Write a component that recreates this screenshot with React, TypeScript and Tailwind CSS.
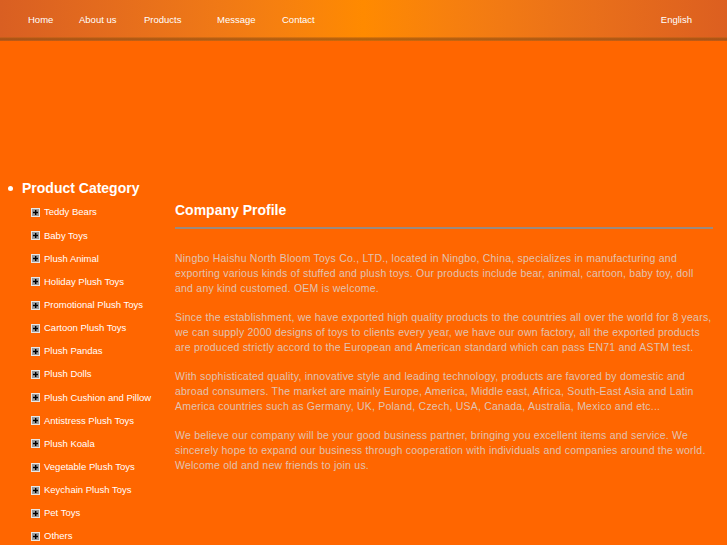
const navLinks = [
  { label: "Home", w: "w-[51px]" },
  { label: "About us", w: "w-[65px]" },
  { label: "Products", w: "w-[73px]" },
  { label: "Message", w: "w-[65px]" },
  { label: "Contact", w: "w-[60px]" },
];

const categories = [
  "Teddy Bears",
  "Baby Toys",
  "Plush Animal",
  "Holiday Plush Toys",
  "Promotional Plush Toys",
  "Cartoon Plush Toys",
  "Plush Pandas",
  "Plush Dolls",
  "Plush Cushion and Pillow",
  "Antistress Plush Toys",
  "Plush Koala",
  "Vegetable Plush Toys",
  "Keychain Plush Toys",
  "Pet Toys",
  "Others",
];

function PlusBox() {
  return (
    <span className="flex h-[9px] w-[9px] shrink-0 items-center justify-center border border-[#e8e8e8] bg-[#9a9a9a]">
      <svg width="7" height="7" viewBox="0 0 7 7">
        <rect x="3" y="1" width="1.4" height="5" fill="#000" />
        <rect x="1" y="2.8" width="5" height="1.4" fill="#000" />
      </svg>
    </span>
  );
}

export default function App() {
  return (
    <div className="min-h-[545px] bg-[#ff6600] font-['Liberation_Sans',Arial,sans-serif]">
      {/* ── Top nav ── */}
      <header className="relative h-[41px] bg-linear-to-r from-[#d95f22] via-[#ff8a00] to-[#dc5f20]">
        <nav className="flex h-[40px] items-center pl-[28px] pr-[35px] text-[9.5px] text-white">
          {navLinks.map((l) => (
            <a key={l.label} className={l.w}>
              {l.label}
            </a>
          ))}
          <a className="ml-auto">English</a>
        </nav>
        <div className="absolute bottom-0 inset-x-0 h-[4px] bg-linear-to-b from-[#c96a10]/40 via-[#8a4a10]/70 to-[#b35a10]/60" />
      </header>

      {/* ── Body ── */}
      <div className="flex pt-[137px]">
        {/* Sidebar */}
        <aside className="w-[175px] shrink-0">
          <h2 className="flex items-center gap-[9px] pl-[8px] text-[14px] font-bold text-white">
            <span className="h-[5px] w-[5px] rounded-full bg-white" />
            Product Category
          </h2>
          <ul className="mt-[7px] flex flex-col gap-[10.15px] pl-[31px] text-[9.5px] text-white">
            {categories.map((c) => (
              <li key={c} className="flex h-[13px] items-center gap-[4px]">
                <PlusBox />
                <span>{c}</span>
              </li>
            ))}
          </ul>
        </aside>

        {/* Main content */}
        <main className="mr-[14px] flex-1 pt-[22px]">
          <h1 className="text-[14px] font-bold text-white">Company Profile</h1>
          <div className="mt-[6px] h-[2px] bg-[#9a8a80]" />
          <div className="mt-[22px] mr-[-1px] flex flex-col gap-[14px] text-[10.5px] leading-[15px] tracking-[0.22px] text-[#e2c3b2]">
            <p>
              Ningbo Haishu North Bloom Toys Co., LTD., located in Ningbo, China, specializes in manufacturing and
              exporting various kinds of stuffed and plush toys. Our products include bear, animal, cartoon, baby toy, doll
              and any kind customed. OEM is welcome.
            </p>
            <p>
              Since the establishment, we have exported high quality products to the countries all over the world for 8 years,
              we can supply 2000 designs of toys to clients every year, we have our own factory, all the exported products
              are produced strictly accord to the European and American standard which can pass EN71 and ASTM test.
            </p>
            <p>
              With sophisticated quality, innovative style and leading technology, products are favored by domestic and
              abroad consumers. The market are mainly Europe, America, Middle east, Africa, South-East Asia and Latin
              America countries such as Germany, UK, Poland, Czech, USA, Canada, Australia, Mexico and etc...
            </p>
            <p>
              We believe our company will be your good business partner, bringing you excellent items and service. We
              sincerely hope to expand our business through cooperation with individuals and companies around the world.
              Welcome old and new friends to join us.
            </p>
          </div>
        </main>
      </div>
    </div>
  );
}
